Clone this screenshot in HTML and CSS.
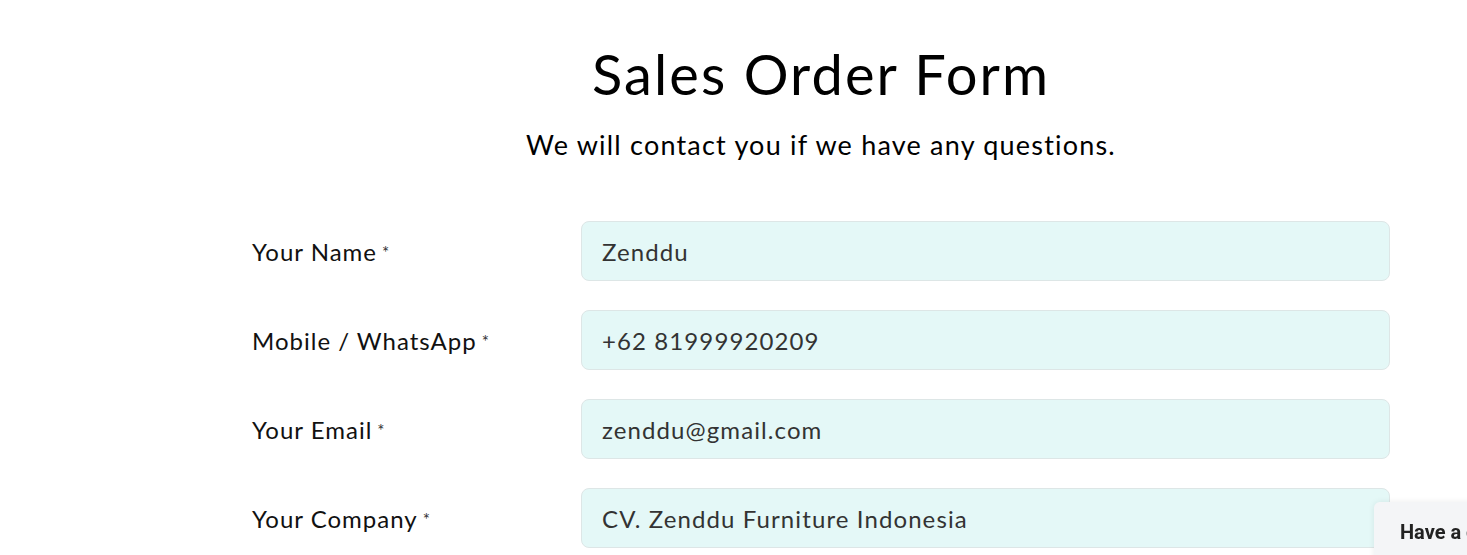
FILE: index.html
```html
<!DOCTYPE html>
<html lang="en">

<head>
    <meta charset="UTF-8">
    <meta name="viewport" content="width=device-width, initial-scale=1.0">
    <title>Sales Order Form</title>
    <link rel="stylesheet" href="styles.css">
</head>

<body>
    <div class="form-wrap">
        <h1 class="form-title">Sales Order Form</h1>
        <p class="form-sub">We will contact you if we have any questions.</p>

        <form class="order-form">
            <div class="form-row">
                <label for="name">Your Name<span class="req">*</span></label>
                <input type="text" id="name" value="Zenddu">
            </div>
            <div class="form-row">
                <label for="mobile">Mobile / WhatsApp<span class="req">*</span></label>
                <input type="text" id="mobile" value="+62 81999920209">
            </div>
            <div class="form-row">
                <label for="email">Your Email<span class="req">*</span></label>
                <input type="text" id="email" value="zenddu@gmail.com">
            </div>
            <div class="form-row">
                <label for="company">Your Company<span class="req">*</span></label>
                <input type="text" id="company" value="CV. Zenddu Furniture Indonesia">
            </div>
        </form>
    </div>

    <!-- chat widget tab -->
    <div class="chat-tab">Have a question?</div>
</body>

</html>
```

FILE: styles.css
```css
body {
    margin: 0;
    background: #fff;
    font-family: 'Lato', 'Open Sans', sans-serif;
    color: #000;
}

.form-wrap {
    width: 1138px;
    margin-left: 252px;
    padding-top: 41px;
}

.form-title {
    margin: 0;
    text-align: center;
    font-weight: 400;
    font-size: 56px;
    line-height: 66px;
    letter-spacing: 2.1px;
}

.form-sub {
    margin: 18px 0 0;
    text-align: center;
    font-size: 27px;
    line-height: 40px;
    letter-spacing: 1.2px;
}

.order-form {
    margin-top: 56px;
    display: flex;
    flex-direction: column;
    gap: 29px;
}

.form-row {
    display: flex;
    align-items: center;
}

.form-row label {
    width: 329px;
    flex-shrink: 0;
    font-size: 24px;
    letter-spacing: 1px;
    color: #111;
}

.req {
    margin-left: 5px;
    font-size: 17px;
    letter-spacing: 0;
    vertical-align: 2px;
    color: #333;
}

.form-row input {
    flex: 1;
    height: 60px;
    box-sizing: border-box;
    padding: 0 20px;
    border: 1px solid #dde6e6;
    border-radius: 8px;
    background: #e4f8f7;
    font-family: inherit;
    font-size: 24px;
    letter-spacing: 1.1px;
    color: #333;
    outline: none;
}

.chat-tab {
    position: fixed;
    left: 1374px;
    top: 502px;
    padding: 18px 26px;
    background: #f4f5f7;
    border-radius: 6px 0 0 0;
    box-shadow: 0 0 6px rgba(0, 0, 0, 0.08);
    font-family: 'Roboto', sans-serif;
    font-weight: 700;
    font-size: 20px;
    color: #222;
    white-space: nowrap;
}
```
